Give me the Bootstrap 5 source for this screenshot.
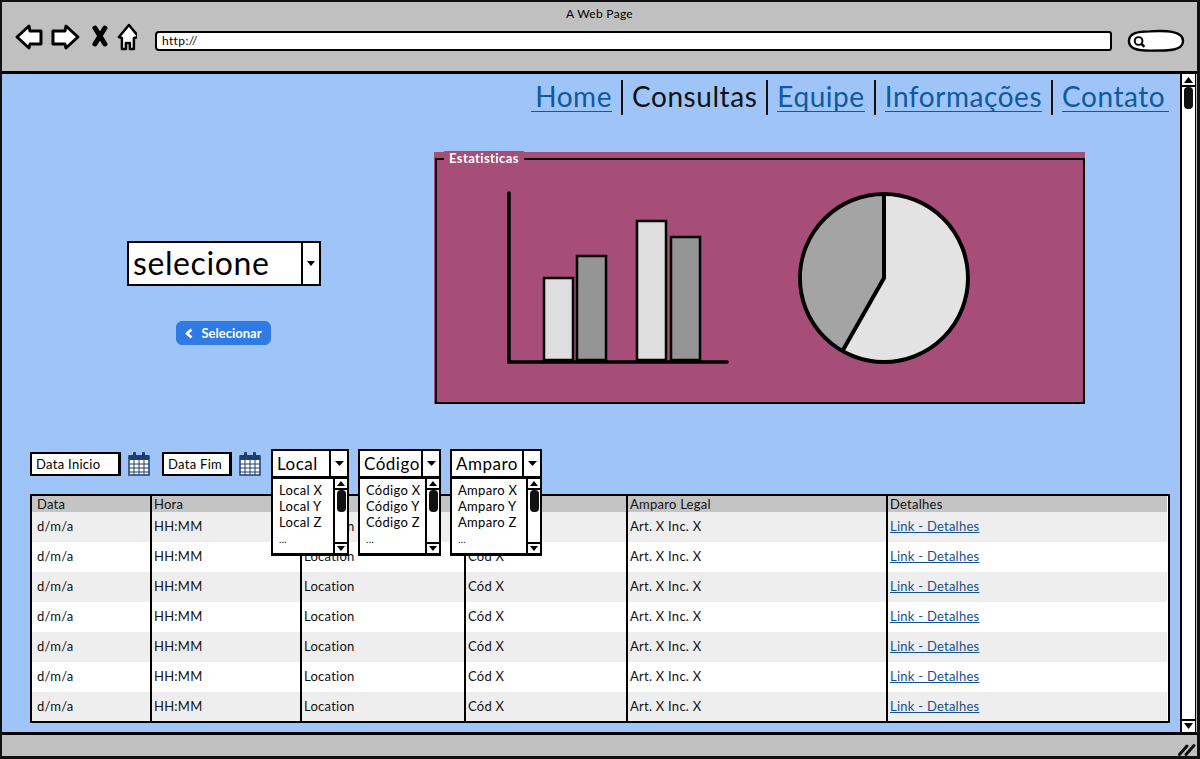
<!DOCTYPE html>
<html lang="en">
<head>
    <meta charset="utf-8">
    <title>A Web Page</title>
    <link href="https://cdn.jsdelivr.net/npm/bootstrap@5.3.3/dist/css/bootstrap.min.css" rel="stylesheet">
    <script src="https://cdn.jsdelivr.net/npm/bootstrap@5.3.3/dist/js/bootstrap.bundle.min.js"></script>

    <style>
        html, body { height: 100%; overflow: hidden; }
        body {
            font-family: "Lato", "Liberation Sans", sans-serif;
            color: #000;
            background: #fff;
        }

        /* browser window */
        .win {
            width: 1200px;
            height: 759px;
            border: 3px solid #111;
            border-top-width: 2px;
            border-left-width: 2px;
            background: #c0c0c0;
        }
        .win-top { height: 72px; border-bottom: 3px solid #000; flex: none; }
        .win-title { font-size: 12px; line-height: 14px; padding-top: 5px; letter-spacing: .3px; }
        .tool-row { padding: 0 12px 0 10px; height: 40px; }
        .url-bar {
            width: 958px;
            height: 20px;
            margin-left: 18px;
            padding-left: 5px;
            background: #fff;
            border: 2px solid #000;
            border-radius: 4px 3px 3px 4px;
            font-size: 12px;
            line-height: 16px;
            letter-spacing: .4px;
        }
        .search-box { margin-left: 15px; }
        .win-mid { height: 658px; flex: none; }
        .win-bottom { flex: 1; border-top: 3px solid #000; padding: 8px 1px 0 0; }

        .page-area { background: #9fc4f8; flex: 1; min-width: 0; }
        .scroll-col { width: 16px; background: #fff; border-left: 2px solid #000; border-right: 1px solid #000; margin-right: 1px; }
        .scroll-btn { height: 13px; flex: none; border-bottom: 2px solid #000; line-height: 0; text-align: center; padding-top: 3px; }
        .scroll-btn.down { border-bottom: 0; border-top: 2px solid #000; padding-top: 2px; margin-top: auto; }
        .scroll-grip { width: 9px; height: 22px; background: #111; border-radius: 4px; margin: 0 auto; }

        /* top menu */
        .top-menu { padding: 6px 2px 0 0; height: 41px; }
        .top-menu .nav-item { border-left: 2px solid #111; height: 35px; padding: 0 9px; }
        .top-menu .nav-item:first-child { border-left: 0; }
        .top-menu .nav-link {
            padding: 2px 0 0;
            font-size: 28px;
            line-height: 29px;
            letter-spacing: .55px;
            word-spacing: -4px;
            color: #0f5a9c;
            border-bottom: 1px solid #0f5a9c;
            white-space: pre;
        }
        .top-menu .nav-link.active { color: #111; border-bottom: 0; }

        /* selector + statistics */
        .stats-row { padding-top: 37px; height: 334px; }
        .pick-col { width: 432px; padding-top: 89px; padding-left: 125px; }
        .big-select { width: 194px; height: 45px; font-size: 32px; line-height: 40px; letter-spacing: .6px; }
        .big-select .sel-text { padding-left: 4px; }
        .go-btn {
            width: 95px;
            height: 24px;
            margin: 35px 0 0 49px;
            padding: 0;
            font-size: 13px;
            font-weight: 700;
            line-height: 22px;
            color: #fff;
            background: #2f7ae3;
            border-color: #2f7ae3;
            border-radius: 6px;
        }
        .go-btn svg { margin-right: 8px; vertical-align: -1px; }
        .stats-panel { width: 651px; height: 252px; background: #a64d78; padding-top: 6px; }
        .stats-frame { height: 100%; border: 2px solid #000; margin-left: 1px; }
        .stats-legend {
            display: table;
            margin: -9px 0 -6px 7px;
            padding: 0 5px;
            background: #a64d78;
            color: #fff;
            font-size: 13px;
            font-weight: 700;
            line-height: 14px;
            letter-spacing: .4px;
        }
        .stats-frame svg { display: block; }

        /* filters */
        .filter-row { padding-left: 28px; height: 45px; align-items: flex-start; }
        .date-box {
            height: 24px;
            margin-top: 3px;
            padding-left: 4px;
            background: #fff;
            border: 2px solid #000;
            border-right-width: 3px;
            font-size: 13px;
            line-height: 20px;
            letter-spacing: .3px;
        }
        .date-a { width: 91px; }
        .date-b { width: 70px; }
        .cal-icon { margin: 3px 12px 0 7px; }
        .cal-icon.last { margin-right: 10px; }
        .drop-wrap { margin-right: 9px; }
        .sel-box { background: #fff; border: 2px solid #000; overflow: hidden; }
        .sel-text { flex: 1; white-space: nowrap; }
        .sel-caret { width: 18px; flex: none; border-left: 2px solid #000; }
        .mid-select { height: 29px; font-size: 17px; line-height: 25px; letter-spacing: .5px; }
        .mid-select .sel-text { padding-left: 4px; }
        .w-local { width: 78px; }
        .w-codigo { width: 83px; }
        .w-amparo { width: 92px; }
        .drop-list {
            position: absolute;
            top: 28px;
            left: 0;
            right: 0;
            height: 79px;
            background: #fff;
            border: 2px solid #000;
            border-bottom-width: 3px;
            z-index: 5;
        }
        .drop-items { flex: 1; padding: 3px 0 0 6px; font-size: 13px; line-height: 16px; letter-spacing: .3px; white-space: nowrap; }
        .drop-items .more { font-size: 10px; }
        .drop-scroll { width: 14px; flex: none; border-left: 2px solid #000; }
        .drop-scroll .scroll-btn { height: 11px; padding-top: 2px; border-bottom-width: 2px; }
        .drop-scroll .scroll-btn.down { padding-top: 2px; border-bottom: 0; }
        .drop-scroll .scroll-grip { width: 9px; height: 22px; }

        /* data table */
        .grid-wrap { margin: 0 10px 0 28px; border: 2px solid #000; height: 229px; overflow: hidden; background: #fff; }
        .data-grid { table-layout: fixed; width: 1135px; margin: 0; font-size: 13px; color: #111; letter-spacing: .25px; }
        .data-grid th, .data-grid td {
            padding: 0 0 0 2px;
            border: 0;
            border-left: 2px solid #000;
            background: transparent;
            box-shadow: none;
            vertical-align: middle;
            white-space: nowrap;
            font-weight: 400;
        }
        .data-grid th:first-child, .data-grid td:first-child { border-left: 0; padding-left: 5px; }
        .data-grid thead tr { height: 16px; background: #c4c4c4; line-height: 15px; }
        .data-grid tbody tr { height: 30px; }
        .data-grid tbody tr:nth-child(odd) { background: #eeeeee; }
        .data-grid a { color: #14508f; }
    </style>
</head>
<body>

    <div class="win d-flex flex-column">
        <!-- browser toolbar -->
        <div class="win-top">
            <div class="win-title text-center">A Web Page</div>
            <div class="tool-row d-flex align-items-center">
                <svg width="125" height="38" viewBox="13 22 125 38" fill="#fff" stroke="#000" stroke-width="3" stroke-linejoin="round">
                    <path d="M18 37 L30 26 L31 31 L42 31 L42 44 L31 44 L30 48 Z"/>
                    <path d="M79 37 L67 26 L66 31 L54 31 L54 44 L66 44 L67 48 Z"/>
                    <path d="M96 28 L106 44 M106 28 L96 44" stroke-width="5" stroke-linecap="round"/>
                    <path d="M130 25 L140 37 L135 38 L135 49 L131 49 L131 43 L127 43 L127 49 L123 49 L123 38 L120 37 Z" stroke-width="2.5"/>
                </svg>
                <div class="url-bar">http://</div>
                <svg class="search-box" width="58" height="24" viewBox="0 0 60 24">
                    <path d="M2 12 C2 4 10 2 24 2 C42 1 58 2 58 12 C58 22 44 22 24 22 C10 22 2 20 2 12 Z" fill="#fff" stroke="#000" stroke-width="2.5"/>
                    <circle cx="12" cy="12" r="4" fill="#fff" stroke="#000" stroke-width="2"/>
                    <path d="M15 15 L18 18" stroke="#000" stroke-width="2.5"/>
                </svg>
            </div>
        </div>

        <div class="win-mid d-flex">
            <div class="page-area">
                <ul class="nav top-menu justify-content-end">
                    <li class="nav-item"><a class="nav-link" href="#"> Home</a></li>
                    <li class="nav-item"><a class="nav-link active" href="#">Consultas</a></li>
                    <li class="nav-item"><a class="nav-link" href="#">Equipe</a></li>
                    <li class="nav-item"><a class="nav-link" href="#">Informações</a></li>
                    <li class="nav-item"><a class="nav-link" href="#">Contato </a></li>
                </ul>

                <div class="stats-row d-flex">
                    <div class="pick-col">
                        <div class="sel-box big-select d-flex">
                            <div class="sel-text">selecione</div>
                            <div class="sel-caret d-flex align-items-center justify-content-center">
                                <svg width="8" height="5"><path d="M0 0 H8 L4 5 Z"/></svg>
                            </div>
                        </div>
                        <button class="btn btn-primary go-btn" type="button">
                            <svg width="8" height="11" viewBox="0 0 8 11"><path d="M6.5 1.5 L2 5.5 L6.5 9.5" fill="none" stroke="#fff" stroke-width="2.6"/></svg>Selecionar
                        </button>
                    </div>
                    <div class="stats-panel">
                        <div class="stats-frame">
                            <div class="stats-legend">Estatisticas</div>
                            <svg width="646" height="242" viewBox="437 160 646 242">
                                <g stroke="#000" stroke-width="2.5">
                                    <rect x="544" y="279" width="29" height="82" fill="#dedede"/>
                                    <rect x="577" y="257" width="29" height="104" fill="#959595"/>
                                    <rect x="637" y="222" width="29" height="139" fill="#dedede"/>
                                    <rect x="671" y="238" width="29" height="123" fill="#959595"/>
                                </g>
                                <path d="M509 194 V363 H727" fill="none" stroke="#000" stroke-width="3.5" stroke-linecap="round"/>
                                <circle cx="884" cy="279" r="84" fill="#e3e3e3"/>
                                <path d="M884 195 V279 L843 351 A84 84 0 0 1 884 195 Z" fill="#a4a4a4"/>
                                <path d="M884 195 V279 L843 351" fill="none" stroke="#000" stroke-width="4" stroke-linejoin="round"/>
                                <circle cx="884" cy="279" r="84" fill="none" stroke="#000" stroke-width="4"/>
                            </svg>
                        </div>
                    </div>
                </div>

                <!-- filters, lists open over the table -->
                <div class="filter-row d-flex">
                    <div class="date-box date-a">Data Inicio</div>
                    <svg class="cal-icon" width="22" height="24" viewBox="0 0 22 24">
                        <rect x="1" y="4" width="20" height="19" fill="#fff" stroke="#1f3f6e" stroke-width="1.5"/>
                        <rect x="1" y="3" width="20" height="5" fill="#1f3f6e"/>
                        <rect x="5" y="0" width="3" height="6" rx="1" fill="#1f3f6e"/>
                        <rect x="14" y="0" width="3" height="6" rx="1" fill="#1f3f6e"/>
                        <path d="M6 8 V23 M11 8 V23 M16 8 V23 M1 12 H21 M1 16 H21 M1 20 H21" stroke="#1f3f6e" fill="none"/>
                    </svg>
                    <div class="date-box date-b">Data Fim</div>
                    <svg class="cal-icon last" width="22" height="24" viewBox="0 0 22 24">
                        <rect x="1" y="4" width="20" height="19" fill="#fff" stroke="#1f3f6e" stroke-width="1.5"/>
                        <rect x="1" y="3" width="20" height="5" fill="#1f3f6e"/>
                        <rect x="5" y="0" width="3" height="6" rx="1" fill="#1f3f6e"/>
                        <rect x="14" y="0" width="3" height="6" rx="1" fill="#1f3f6e"/>
                        <path d="M6 8 V23 M11 8 V23 M16 8 V23 M1 12 H21 M1 16 H21 M1 20 H21" stroke="#1f3f6e" fill="none"/>
                    </svg>

                    <div class="drop-wrap position-relative w-local">
                        <div class="sel-box mid-select d-flex">
                            <div class="sel-text">Local</div>
                            <div class="sel-caret d-flex align-items-center justify-content-center"><svg width="9" height="5"><path d="M0 0 H9 L4.5 5 Z"/></svg></div>
                        </div>
                        <div class="drop-list d-flex">
                            <div class="drop-items">Local X<br>Local Y<br>Local Z<br><span class="more">...</span></div>
                            <div class="drop-scroll d-flex flex-column">
                                <div class="scroll-btn"><svg width="8" height="5"><path d="M0 5 H8 L4 0 Z"/></svg></div>
                                <div class="scroll-grip"></div>
                                <div class="scroll-btn down"><svg width="8" height="5"><path d="M0 0 H8 L4 5 Z"/></svg></div>
                            </div>
                        </div>
                    </div>

                    <div class="drop-wrap position-relative w-codigo">
                        <div class="sel-box mid-select d-flex">
                            <div class="sel-text">Código</div>
                            <div class="sel-caret d-flex align-items-center justify-content-center"><svg width="9" height="5"><path d="M0 0 H9 L4.5 5 Z"/></svg></div>
                        </div>
                        <div class="drop-list d-flex">
                            <div class="drop-items">Código X<br>Código Y<br>Código Z<br><span class="more">...</span></div>
                            <div class="drop-scroll d-flex flex-column">
                                <div class="scroll-btn"><svg width="8" height="5"><path d="M0 5 H8 L4 0 Z"/></svg></div>
                                <div class="scroll-grip"></div>
                                <div class="scroll-btn down"><svg width="8" height="5"><path d="M0 0 H8 L4 5 Z"/></svg></div>
                            </div>
                        </div>
                    </div>

                    <div class="drop-wrap position-relative w-amparo">
                        <div class="sel-box mid-select d-flex">
                            <div class="sel-text">Amparo</div>
                            <div class="sel-caret d-flex align-items-center justify-content-center"><svg width="9" height="5"><path d="M0 0 H9 L4.5 5 Z"/></svg></div>
                        </div>
                        <div class="drop-list d-flex">
                            <div class="drop-items">Amparo X<br>Amparo Y<br>Amparo Z<br><span class="more">...</span></div>
                            <div class="drop-scroll d-flex flex-column">
                                <div class="scroll-btn"><svg width="8" height="5"><path d="M0 5 H8 L4 0 Z"/></svg></div>
                                <div class="scroll-grip"></div>
                                <div class="scroll-btn down"><svg width="8" height="5"><path d="M0 0 H8 L4 5 Z"/></svg></div>
                            </div>
                        </div>
                    </div>
                </div>

                <div class="grid-wrap">
                    <table class="table data-grid">
                        <colgroup>
                            <col style="width:119px"><col style="width:150px"><col style="width:164px">
                            <col style="width:162px"><col style="width:260px"><col>
                        </colgroup>
                        <thead>
                            <tr><th>Data</th><th>Hora</th><th>Local</th><th>Código</th><th>Amparo Legal</th><th>Detalhes</th></tr>
                        </thead>
                        <tbody id="gridBody"></tbody>
                    </table>
                </div>
            </div>

            <div class="scroll-col d-flex flex-column">
                <div class="scroll-btn"><svg width="9" height="6"><path d="M0 6 H9 L4.5 0 Z"/></svg></div>
                <div class="scroll-grip"></div>
                <div class="scroll-btn down"><svg width="9" height="6"><path d="M0 0 H9 L4.5 6 Z"/></svg></div>
            </div>
        </div>

        <div class="win-bottom d-flex justify-content-end">
            <svg width="18" height="13" viewBox="0 0 18 13">
                <path d="M1.5 11.5 L9 3 M8 11.5 L16 2.5" stroke="#111" stroke-width="3" stroke-linecap="round"/>
            </svg>
        </div>
    </div>

    <script>
        // seven identical rows
        const gridBody = document.getElementById("gridBody");
        for (let i = 0; i < 7; i++) {
            gridBody.insertAdjacentHTML("beforeend",
                '<tr><td>d/m/a</td><td>HH:MM</td><td>Location</td><td>Cód X</td><td>Art. X Inc. X</td><td><a href="#">Link - Detalhes</a></td></tr>');
        }
    </script>
</body>
</html>
